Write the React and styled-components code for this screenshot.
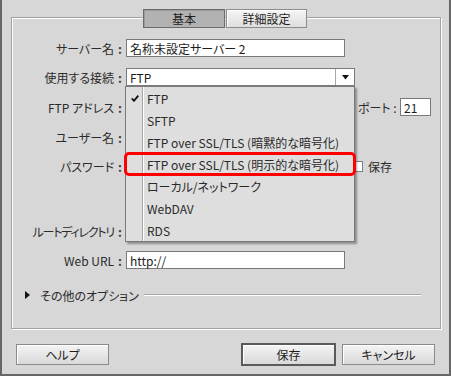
import React from "react";
import styled, { createGlobalStyle } from "styled-components";

const GlobalStyle = createGlobalStyle`
body {
  margin: 0;
  background: #d7d7d7;
}
* {
  box-sizing: border-box;
}
`;

const connections = [
  "FTP",
  "SFTP",
  "FTP over SSL/TLS (暗黙的な暗号化)",
  "FTP over SSL/TLS (明示的な暗号化)",
  "ローカル/ネットワーク",
  "WebDAV",
  "RDS",
];

const FieldLabel = ({ children, tight }) => (
  <Label>
    <LabelText $tight={tight}>{children}</LabelText>
    <Colon>:</Colon>
  </Label>
);

const App = () => {
  return (
    <>
      <GlobalStyle />
      <Window>
        <TabBar>
          <Tab $active>基本</Tab>
          <Tab>詳細設定</Tab>
        </TabBar>
        <Panel>
          <Row $gap={21}>
            <FieldLabel>サーバー名</FieldLabel>
            <Field $w={219}>名称未設定サーバー 2</Field>
          </Row>
          <Row $gap={11}>
            <FieldLabel>使用する接続</FieldLabel>
            <SelectWrap>
              <Field $w={229}>
                <SelectText>FTP</SelectText>
                <ArrowBox>
                  <svg width="7" height="5" viewBox="0 0 7 5">
                    <path d="M0 0 H7 L3.5 4.5 Z" fill="#111" />
                  </svg>
                </ArrowBox>
              </Field>
              <Dropdown>
                {connections.map((c, i) => (
                  <MenuItem key={c} $marked={i === 3}>
                    {i === 0 && (
                      <Check width="8" height="7" viewBox="0 0 8 7">
                        <path d="M0.8 3.4 L3 5.8 L7.3 0.6" stroke="#111" strokeWidth="1.8" fill="none" />
                      </Check>
                    )}
                    {c}
                  </MenuItem>
                ))}
              </Dropdown>
            </SelectWrap>
          </Row>
          <Row $gap={12}>
            <FieldLabel>FTP アドレス</FieldLabel>
            <Field $w={226} />
            <PortLabel>ポート :</PortLabel>
            <Field $w={31}>21</Field>
          </Row>
          <Row $gap={12}>
            <FieldLabel>ユーザー名</FieldLabel>
            <Field $w={219} />
          </Row>
          <Row $gap={11}>
            <FieldLabel>パスワード</FieldLabel>
            <Field $w={226} />
            <CheckBox />
            <CheckText>保存</CheckText>
          </Row>
          <Row $gap={47}>
            <FieldLabel tight>ルートディレクトリ</FieldLabel>
            <Field $w={219} />
          </Row>
          <Row $gap={11}>
            <FieldLabel>Web URL</FieldLabel>
            <Field $w={219}>http://</Field>
          </Row>
          <Options>
            <svg width="5" height="8" viewBox="0 0 5 8">
              <path d="M0 0 L5 4 L0 8 Z" fill="#111" />
            </svg>
            <OptionsText>その他のオプション</OptionsText>
            <Rule />
          </Options>
        </Panel>
        <Footer>
          <Button $w={93}>ヘルプ</Button>
          <RightButtons>
            <Button $w={95} $default>保存</Button>
            <Button $w={93}>キャンセル</Button>
          </RightButtons>
        </Footer>
      </Window>
    </>
  );
};

const Window = styled.div`
width: 451px;
height: 376px;
background: #d7d7d7;
border-left: 2px solid #676767;
border-right: 2px solid #676767;
border-bottom: 2px solid #676767;
padding: 9px 0 0 9px;
display: flex;
flex-direction: column;
font-family: "Noto Sans CJK JP", "Noto Sans", sans-serif;
font-feature-settings: "palt";
font-size: 12px;
color: #2b2b2b;
`;

const TabBar = styled.div`
width: 430px;
display: flex;
justify-content: center;
gap: 1px;
padding-right: 2px;
margin-bottom: -11px;
position: relative;
z-index: 1;
`;

const Tab = styled.div`
width: ${(p) => (p.$active ? 82 : 81)}px;
height: 19px;
display: flex;
align-items: center;
justify-content: center;
border: 1px solid ${(p) => (p.$active ? "#6c6c6c" : "#8c8c8c")};
background: ${(p) => (p.$active ? "#b2b2b2" : "linear-gradient(#f5f5f5, #dedede)")};
box-shadow: inset 1px 1px 0 ${(p) => (p.$active ? "#9a9a9a" : "#ffffff")};
color: #1e1e1e;
`;

const Panel = styled.div`
width: 430px;
height: 312px;
border: 1px solid #a2a2a2;
box-shadow: inset 1px 1px 0 #fff, 1px 1px 0 #fff;
`;

const Row = styled.div`
display: flex;
align-items: center;
height: 18px;
margin-top: ${(p) => p.$gap}px;
`;

const Label = styled.div`
width: 114px;
flex-shrink: 0;
display: flex;
justify-content: flex-end;
align-items: center;
padding-right: 4px;
white-space: nowrap;
`;

const LabelText = styled.span`
letter-spacing: ${(p) => (p.$tight ? "-1.2px" : "0")};
`;

const Colon = styled.span`
margin-left: 4px;
font-weight: 700;
color: #3a3a3a;
`;

const Field = styled.div`
width: ${(p) => p.$w}px;
height: 18px;
flex-shrink: 0;
display: flex;
align-items: center;
padding-left: 3px;
background: #fff;
border: 1px solid #7a7a7a;
color: #1c1c1c;
white-space: nowrap;
`;

const SelectWrap = styled.div`
position: relative;
`;

const SelectText = styled.span`
flex: 1;
`;

const ArrowBox = styled.div`
width: 19px;
height: 100%;
display: flex;
align-items: center;
justify-content: center;
border-left: 1px solid #a8a8a8;
`;

const Dropdown = styled.div`
position: absolute;
top: 18px;
left: -1px;
width: 230px;
background: #dedede;
border: 1px solid #7a7a7a;
box-shadow: 2px 2px 2px rgba(0, 0, 0, 0.35);
z-index: 5;
&::before {
  content: "";
  position: absolute;
  top: 0;
  bottom: 0;
  left: 16px;
  width: 1px;
  background: #a6a6a6;
  box-shadow: 1px 0 0 #fff;
}
`;

const MenuItem = styled.div`
position: relative;
height: 22px;
display: flex;
align-items: center;
padding-left: 21px;
white-space: nowrap;
color: #2a2a2a;
${(p) =>
  p.$marked &&
  `
  &::after {
    content: "";
    position: absolute;
    top: -1px;
    bottom: -1px;
    left: -2px;
    right: -2px;
    border: 3px solid #ff0000;
    border-radius: 5px;
  }
`}
`;

const Check = styled.svg`
position: absolute;
left: 5px;
top: 8px;
`;

const PortLabel = styled.div`
width: 48px;
padding-left: 6px;
white-space: nowrap;
`;

const CheckBox = styled.div`
width: 10px;
height: 11px;
margin-left: 1px;
background: #fff;
border: 1px solid #808080;
`;

const CheckText = styled.span`
margin-left: 5px;
`;

const Options = styled.div`
display: flex;
align-items: center;
height: 14px;
margin-top: 19px;
padding-left: 13px;
`;

const OptionsText = styled.span`
margin-left: 10px;
white-space: nowrap;
`;

const Rule = styled.div`
flex: 1;
height: 2px;
margin: 0 19px 0 5px;
border-top: 1px solid #a6a6a6;
border-bottom: 1px solid #fff;
`;

const Footer = styled.div`
width: 430px;
height: 23px;
margin-top: 14px;
padding: 0 6px 0 5px;
display: flex;
align-items: center;
justify-content: space-between;
`;

const RightButtons = styled.div`
display: flex;
align-items: center;
gap: 6px;
`;

const Button = styled.div`
width: ${(p) => p.$w}px;
height: ${(p) => (p.$default ? 23 : 21)}px;
display: flex;
align-items: center;
justify-content: center;
border: ${(p) => (p.$default ? "2px solid #5a5a5a" : "1px solid #8a8a8a")};
background: linear-gradient(#f4f4f4, #d9d9d9);
box-shadow: inset 1px 1px 0 #fff;
color: #1e1e1e;
`;

export default App;
